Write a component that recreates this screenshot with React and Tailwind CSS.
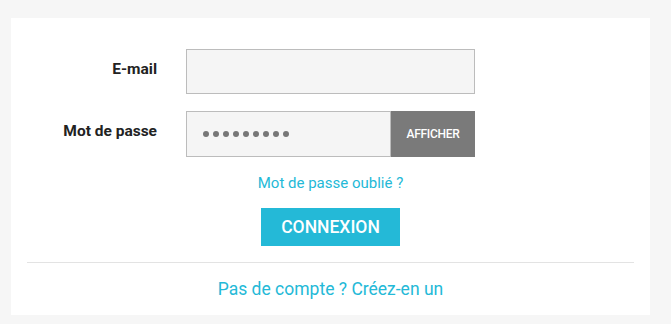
export default function App() {
  return (
    <div className="min-h-[324px] w-[671px] bg-[#f6f6f6] pt-[18px] pl-[11px]" style={{ fontFamily: "Roboto, 'Liberation Sans', sans-serif" }}>
      <div className="w-[639px] h-[297px] bg-white px-4 pt-[31px] flex flex-col">
        <div className="flex items-center">
          <div className="w-[130px] text-right text-[15.5px] font-bold text-[#222] -mt-[3px]">E-mail</div>
          <div className="ml-[29px] w-[289px] h-[45px] border border-[#bcbcbc] bg-[#f5f5f5]"></div>
        </div>
        <div className="flex items-center mt-[17px]">
          <div className="w-[130px] text-right text-[15.5px] font-bold text-[#222] -mt-[4px]">Mot de passe</div>
          <div className="ml-[29px] w-[289px] h-[46px] flex">
            <div className="flex-1 border border-[#bcbcbc] bg-[#f5f5f5] flex items-center pl-[16px] gap-[4px]">
              {Array.from({ length: 9 }).map((_, i) => (
                <span key={i} className="w-[6px] h-[6px] rounded-full bg-[#777]"></span>
              ))}
            </div>
            <div className="w-[84px] bg-[#7a7a7a] text-white text-[12px] font-medium tracking-[-0.3px] flex items-center justify-center">AFFICHER</div>
          </div>
        </div>
        <div className="text-center text-[15px] text-[#24b9d7] mt-[16px] leading-[20px]">Mot de passe oublié ?</div>
        <div className="flex justify-center mt-[15px]">
          <div className="w-[139px] h-[38px] bg-[#24b9d7] text-white text-[17.5px] font-medium flex items-center justify-center">CONNEXION</div>
        </div>
        <div className="mt-[16px] h-px bg-[#e3e3e3]"></div>
        <div className="text-center text-[17.5px] text-[#24b9d7] mt-[16px] leading-[20px]">Pas de compte ? Créez-en un</div>
      </div>
    </div>
  );
}
